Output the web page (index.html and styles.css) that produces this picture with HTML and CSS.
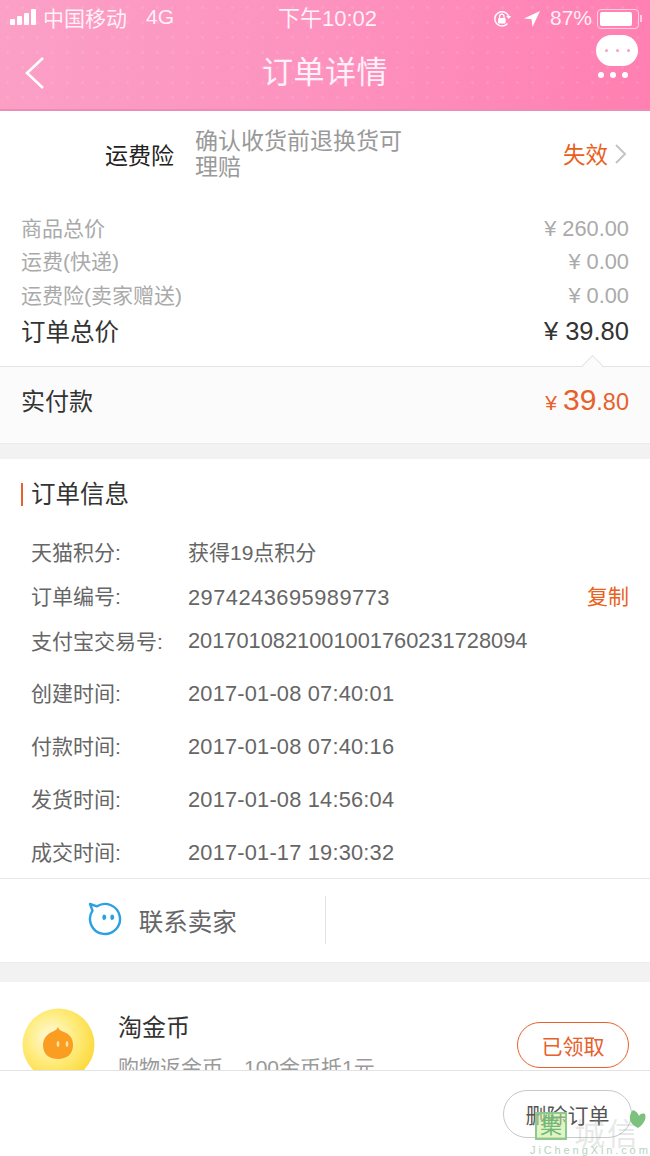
FILE: index.html
```html
<!DOCTYPE html>
<html lang="zh-CN">
<head>
  <meta charset="UTF-8" />
  <meta name="viewport" content="width=device-width, initial-scale=1.0"/>
  <title>订单详情</title>
  <link rel="stylesheet" href="styles.css">
</head>
<body>
  <div class="page">
    <header class="top">
      <div class="status-bar">
        <div class="status-left">
          <span class="signal"><i></i><i></i><i></i><i></i></span>
          <span>中国移动</span>
          <span class="net">4G</span>
        </div>
        <div class="status-time">下午10:02</div>
        <div class="status-right">
          <svg class="lock-icon" width="20" height="20" viewBox="0 0 20 20">
            <path d="M15.5 14.5A7.2 7.2 0 1 1 16.6 7" fill="none" stroke="#fff" stroke-width="1.5"/>
            <path d="M14.2 7h5l-2.5 3z" fill="#fff"/>
            <rect x="6" y="9" width="7.6" height="5.6" rx="1" fill="#fff"/>
            <path d="M7.6 9V7.4a2.2 2.2 0 0 1 4.4 0V9" fill="none" stroke="#fff" stroke-width="1.2"/>
          </svg>
          <svg class="loc-icon" width="18" height="18" viewBox="0 0 18 18">
            <path d="M17 1L1 8.6l7.6.6.9 7.8z" fill="#fff"/>
          </svg>
          <span class="percent">87%</span>
          <span class="battery"><span class="battery-fill"></span></span>
          <span class="battery-tip"></span>
        </div>
      </div>
      <div class="nav-bar">
        <svg class="back" width="22" height="34" viewBox="0 0 22 34">
          <path d="M19 2L3 17l16 15" fill="none" stroke="#fff" stroke-width="2.6"/>
        </svg>
        <h1>订单详情</h1>
        <div class="more">
          <div class="bubble"><i></i><i></i><i></i></div>
          <div class="more-dots"><i></i><i></i><i></i></div>
        </div>
      </div>
    </header>

    <section class="insure">
      <span class="insure-name">运费险</span>
      <span class="insure-desc">确认收货前退换货可理赔</span>
      <span class="insure-state">失效</span>
      <svg class="arrow" width="14" height="22" viewBox="0 0 14 22">
        <path d="M2 2l9 9-9 9" fill="none" stroke="#c4c4c4" stroke-width="2"/>
      </svg>
    </section>

    <section class="prices">
      <div class="price-row"><span class="label">商品总价</span><span class="num">¥ 260.00</span></div>
      <div class="price-row"><span class="label">运费(快递)</span><span class="num">¥ 0.00</span></div>
      <div class="price-row"><span class="label">运费险(卖家赠送)</span><span class="num">¥ 0.00</span></div>
      <div class="price-row total"><span class="label">订单总价</span><span class="num">¥ 39.80</span></div>
    </section>

    <section class="paid">
      <span class="caret"></span>
      <span class="paid-label">实付款</span>
      <span class="paid-sum"><small class="yen">¥</small> <b>39</b><small>.80</small></span>
    </section>

    <div class="gap gap-first"></div>

    <section class="info">
      <h2>订单信息</h2>
      <div class="info-row"><span class="key">天猫积分:</span><span>获得19点积分</span></div>
      <div class="info-row"><span class="key">订单编号:</span><span class="order-no">2974243695989773</span><a class="copy">复制</a></div>
      <div class="info-row"><span class="key">支付宝交易号:</span><span class="trade-no">2017010821001001760231728094</span></div>
      <div class="info-row wide first-wide"><span class="key">创建时间:</span><span class="date">2017-01-08 07:40:01</span></div>
      <div class="info-row wide"><span class="key">付款时间:</span><span class="date">2017-01-08 07:40:16</span></div>
      <div class="info-row wide"><span class="key">发货时间:</span><span class="date">2017-01-08 14:56:04</span></div>
      <div class="info-row wide last-wide"><span class="key">成交时间:</span><span class="date">2017-01-17 19:30:32</span></div>
    </section>

    <section class="contact">
      <div class="contact-cell">
        <svg width="36" height="36" viewBox="0 0 36 36">
          <path d="M4.500 8.700A15 15 0 1 0 9 4.300L2 2z" fill="none" stroke="#29a1e2" stroke-width="2.400" stroke-linejoin="round"/>
          <ellipse cx="16.300" cy="15.300" rx="1.900" ry="2.800" fill="#29a1e2"/>
          <ellipse cx="24.300" cy="15.300" rx="1.900" ry="2.800" fill="#29a1e2"/>
        </svg>
        <span>联系卖家</span>
      </div>
      <div class="contact-cell"></div>
    </section>

    <div class="gap"></div>

    <section class="coin">
      <svg class="coin-pic" width="73" height="73" viewBox="0 0 73 73">
        <defs>
          <radialGradient id="coinFill" cx="0.4" cy="0.4" r="0.65">
            <stop offset="0" stop-color="#fffbe0"/>
            <stop offset="0.55" stop-color="#ffeb7a"/>
            <stop offset="1" stop-color="#fbd93a"/>
          </radialGradient>
        </defs>
        <circle cx="36.500" cy="36.500" r="36" fill="url(#coinFill)"/>
        <path d="M36 19c1 3 3 4 6 5 6 2 9 7 9 13 0 9-6 14-15 14s-15-5-15-14c0-7 5-12 11-14 2-1 3-2 4-4z" fill="#fa9d20"/>
        <ellipse cx="36" cy="36" rx="1.400" ry="3" fill="#ffe2a8"/>
        <ellipse cx="45" cy="36" rx="1.400" ry="3" fill="#ffe2a8"/>
      </svg>
      <div class="coin-text">
        <div class="coin-title">淘金币</div>
        <div class="coin-desc">购物返金币，100金币抵1元</div>
      </div>
      <button class="coin-btn">已领取</button>
    </section>

    <footer class="bottom">
      <button class="del-btn">删除订单</button>
    </footer>

    <div class="mark">
      <span class="mark-box">集</span>
      <span class="mark-name">城信</span>
      <svg class="mark-leaf" width="18" height="19" viewBox="0 0 18 19">
        <path d="M9 18C3 15 0 11 1 6c.5-3 2-5 3-6 3 1 5 3 6 6 1-2 3-3 6-2 2 5-2 11-7 14z" fill="#7cc27e"/>
      </svg>
      <span class="mark-url">JiChengXin.com</span>
    </div>
  </div>
</body>
</html>
```

FILE: styles.css
```css
* { margin: 0; padding: 0; box-sizing: border-box; }

html, body {
  height: 100%;
  font-family: "Liberation Sans", "Noto Sans CJK SC", sans-serif;
  background: #fff;
}

.page {
  position: relative;
  width: 650px;
  height: 1156px;
  overflow: hidden;
  background: #fff;
}

/* Шапка */
.top {
  height: 111px;
  color: #fff;
  background-color: #fe8fbc;
  background-image:
    radial-gradient(circle, rgba(255, 255, 255, 0.1) 1.2px, transparent 1.6px),
    linear-gradient(100deg, #fba0c6 0%, #fd92bf 50%, #ff7fb1 100%);
  background-size: 15px 15px, 100% 100%;
  border-bottom: 2px solid #ec8db6;
}

.status-bar {
  height: 37px;
  display: flex;
  align-items: center;
  justify-content: space-between;
  padding: 0 8px 0 10px;
  font-size: 21px;
  position: relative;
  color: rgba(255, 255, 255, 0.88);
}

.status-left, .status-right {
  display: flex;
  align-items: center;
}

.status-left {
  margin-bottom: 4px;
}

.signal {
  display: flex;
  align-items: flex-end;
  gap: 2px;
  height: 16px;
  margin-right: 7px;
}

.signal i {
  display: block;
  width: 5px;
  border-radius: 1px;
  background: #fff;
}

.signal i:nth-child(1) { height: 6px; }
.signal i:nth-child(2) { height: 9px; }
.signal i:nth-child(3) { height: 12px; }
.signal i:nth-child(4) { height: 16px; }

.net {
  margin-left: 19px;
  font-size: 21px;
}

.status-time {
  position: absolute;
  left: 278px;
  top: 0;
  font-size: 22px;
}

.lock-icon { margin-right: 11px; }
.loc-icon { margin-right: 9px; }

.percent {
  font-size: 21px;
  margin-bottom: 2px;
}

.battery {
  width: 42px;
  height: 20px;
  margin-left: 5px;
  padding: 2px;
  border: 1px solid rgba(255, 255, 255, 0.6);
  border-radius: 4px;
}

.battery-fill {
  display: block;
  width: 32px;
  height: 14px;
  border-radius: 2px;
  background: #fff;
}

.battery-tip {
  width: 2px;
  height: 7px;
  margin-left: 1px;
  background: rgba(255, 255, 255, 0.6);
}

.nav-bar {
  height: 72px;
  padding-bottom: 8px;
  display: flex;
  align-items: center;
  justify-content: center;
  position: relative;
}

.nav-bar h1 {
  font-size: 31px;
  font-weight: normal;
  letter-spacing: 0.5px;
  color: #fff1f7;
}

.back {
  position: absolute;
  left: 24px;
  top: 19px;
}

.more {
  position: absolute;
  left: 596px;
  top: -2px;
}

.bubble {
  width: 42px;
  height: 31px;
  border-radius: 16px;
  background: #fff;
  display: flex;
  align-items: center;
  justify-content: center;
  gap: 8px;
}

.bubble i {
  width: 3px;
  height: 3px;
  border-radius: 50%;
  background: #f9a0c4;
}

.more-dots {
  display: flex;
  gap: 6px;
  margin: 6px 0 0 2px;
}

.more-dots i {
  width: 6px;
  height: 6px;
  border-radius: 50%;
  background: #fff;
}

/* Страховка */
.insure {
  height: 94px;
  display: flex;
  align-items: center;
  padding: 0 22px 8px 105px;
  font-size: 23px;
}

.insure-name {
  width: 90px;
  flex: none;
  color: #222;
}

.insure-desc {
  width: 212px;
  line-height: 26px;
  color: #999;
}

.insure-state {
  margin-left: auto;
  margin-right: 6px;
  margin-bottom: 2px;
  font-size: 22.500px;
  color: #ea5f1d;
}

/* Цены */
.prices {
  padding: 7px 21px 15px;
}

.price-row {
  height: 33.500px;
  display: flex;
  align-items: center;
  justify-content: space-between;
  font-size: 21px;
  color: #aaa;
}

.price-row .label {
  margin-bottom: 4px;
}

.price-row .num {
  font-size: 21.800px;
}

.price-row.total {
  height: 38px;
  font-size: 24.500px;
  color: #333;
}

.price-row.total .label {
  margin-bottom: 2px;
}

.price-row.total .num {
  font-size: 25.500px;
}

.paid {
  position: relative;
  height: 77px;
  display: flex;
  align-items: center;
  justify-content: space-between;
  padding: 0 21px 10px;
  background: #fbfbfb;
  border-top: 1px solid #e3e3e3;
}

.caret {
  position: absolute;
  left: 585px;
  top: -8.500px;
  width: 15px;
  height: 15px;
  transform: rotate(45deg);
  background: #fbfbfb;
  border-top: 1px solid #e3e3e3;
  border-left: 1px solid #e3e3e3;
}

.paid-label {
  font-size: 24px;
  color: #333;
}

.paid-sum {
  color: #e8602a;
  font-size: 22px;
}

.paid-sum b {
  font-size: 30px;
  font-weight: normal;
}

.paid-sum .yen {
  font-size: 21px;
}

.paid-sum small {
  font-size: 23.500px;
}

.gap {
  height: 20px;
  background: #f2f2f2;
  border-top: 1px solid #ececec;
}

.gap-first {
  height: 16px;
}

/* Информация о заказе */
.info {
  padding: 0 21px;
}

.info h2 {
  margin: 24px 0 23px;
  padding-left: 8px;
  border-left: 2px solid #e8602a;
  font-size: 24.500px;
  line-height: 23px;
  font-weight: normal;
  color: #333;
}

.info-row {
  height: 44.500px;
  display: flex;
  align-items: center;
  padding-left: 10px;
  font-size: 21px;
  color: #666;
}

.info-row.wide {
  height: 52.700px;
}

.info-row.first-wide {
  margin-top: 4px;
}

.info-row.last-wide {
  height: 53.700px;
}

.key {
  width: 157px;
  flex: none;
}

.trade-no {
  margin-top: 2px;
  font-size: 21.800px;
}

.order-no {
  margin-top: 6px;
  font-size: 21.800px;
  letter-spacing: 0.5px;
}

.date {
  margin-top: 4px;
  font-size: 21.800px;
  letter-spacing: 0.2px;
}

.copy {
  margin-left: auto;
  color: #ea5f1d;
}

/* Связь */
.contact {
  height: 84px;
  display: flex;
  align-items: center;
  border-top: 1px solid #e8e8e8;
}

.contact-cell {
  width: 325px;
  height: 48px;
  display: flex;
  align-items: center;
  justify-content: center;
  gap: 15px;
  font-size: 24.500px;
  color: #666;
}

.contact-cell:first-child {
  border-right: 1px solid #e3e3e3;
  width: 326px;
}

/* Монеты */
.coin {
  position: relative;
  height: 100px;
  padding: 26px 21px 0 22px;
  display: flex;
  gap: 23px;
}

.coin-pic {
  flex: none;
}

.coin-title {
  font-size: 24px;
  color: #333;
}

.coin-desc {
  font-size: 21px;
  color: #999;
  margin-top: 8px;
}

.coin-btn {
  position: absolute;
  right: 21px;
  top: 40px;
  width: 112px;
  height: 46px;
  border: 1px solid #e8602a;
  border-radius: 23px;
  background: #fff;
  color: #e8602a;
  font: inherit;
  font-size: 21px;
}

/* Нижняя панель */
.bottom {
  position: absolute;
  left: 0;
  top: 1070px;
  width: 100%;
  height: 86px;
  background: #fff;
  border-top: 1px solid #e3e3e3;
}

.del-btn {
  position: absolute;
  left: 503px;
  top: 19px;
  width: 129px;
  height: 48px;
  border: 1px solid #c8c8c8;
  border-radius: 24px;
  background: #fff;
  color: #555;
  font: inherit;
  font-size: 21px;
}

/* Водяной знак */
.mark {
  position: absolute;
  left: 530px;
  top: 1108px;
  width: 120px;
  height: 48px;
  pointer-events: none;
}

.mark-box {
  position: absolute;
  left: 5px;
  top: 4px;
  width: 32px;
  height: 28px;
  border: 2px solid #8cc98e;
  background: rgba(200, 235, 150, 0.55);
  color: #6fb878;
  font-size: 22px;
  line-height: 24px;
  text-align: center;
}

.mark-name {
  position: absolute;
  left: 44px;
  top: 1px;
  font-size: 31px;
  letter-spacing: 2px;
  color: rgba(170, 180, 175, 0.3);
}

.mark-leaf {
  position: absolute;
  left: 99px;
  top: 2px;
}

.mark-url {
  position: absolute;
  left: 0;
  top: 36px;
  font-size: 11px;
  letter-spacing: 2.900px;
  color: #b5d3be;
}
```
